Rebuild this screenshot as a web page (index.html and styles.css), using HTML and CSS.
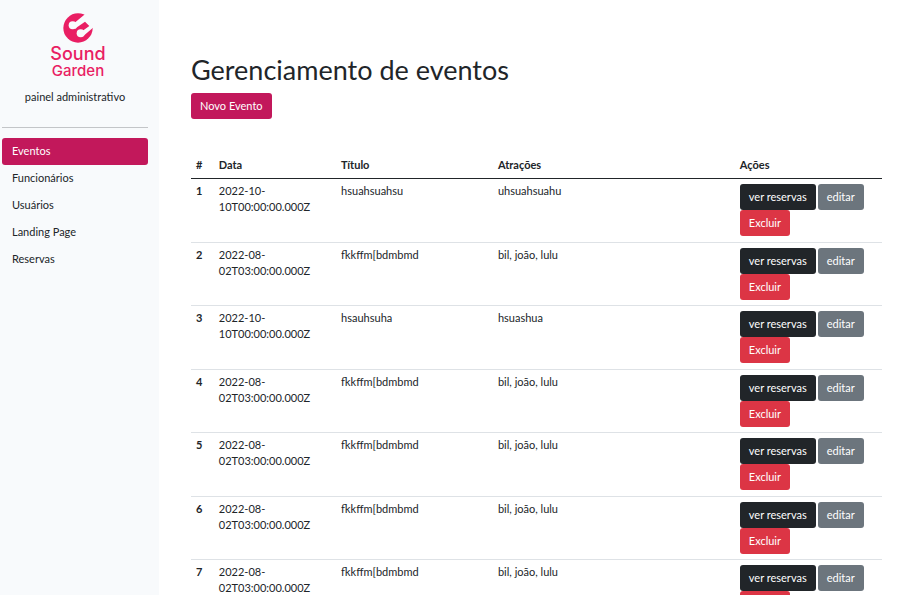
FILE: index.html
```html
<!DOCTYPE html>
<html lang="pt-BR">
<head>
  <meta charset="utf-8">
  <meta name="viewport" content="width=device-width, initial-scale=1">
  <title>Sound Garden - Gerenciamento de eventos</title>
  <link rel="stylesheet" href="styles.css">
</head>
<body>
  <aside class="sidebar">
    <div class="brand">
      <svg class="brand-mark" viewBox="0 0 90 90" aria-hidden="true">
        <circle cx="45" cy="45" r="44" fill="#e91e63"/>
        <path d="M34 30 L64 5 L95 0 L95 40 L62 68 L48 55 L34 44 Z" fill="#f8fafc"/>
        <path d="M36 50 L42 43 L66 26 L79 39 L58 54 L45 66 Z" fill="#e91e63"/>
        <circle cx="29" cy="37" r="12" fill="#f8fafc"/>
        <circle cx="53" cy="61" r="12" fill="#f8fafc"/>
      </svg>
      <span class="brand-sound">Sound</span>
      <span class="brand-garden">Garden</span>
    </div>
    <p class="subtitle">painel administrativo</p>
    <hr class="divider">
    <nav class="menu">
      <a class="menu-link active" href="#eventos">Eventos</a>
      <a class="menu-link" href="#funcionarios">Funcionários</a>
      <a class="menu-link" href="#usuarios">Usuários</a>
      <a class="menu-link" href="#landing">Landing Page</a>
      <a class="menu-link" href="#reservas">Reservas</a>
    </nav>
  </aside>
  <main class="content">
    <h1 class="title">Gerenciamento de eventos</h1>
    <a class="btn btn-primary" href="#novo">Novo Evento</a>
    <table class="events">
      <colgroup><col class="col-id"><col class="col-date"><col class="col-title"><col class="col-acts"><col class="col-actions"></colgroup>
      <thead>
        <tr><th scope="col">#</th><th scope="col">Data</th><th scope="col">Título</th><th scope="col">Atrações</th><th scope="col">Ações</th></tr>
      </thead>
      <tbody>
        <tr><th scope="row">1</th><td>2022-10-10T00:00:00.000Z</td><td>hsuahsuahsu</td><td>uhsuahsuahu</td><td><div class="actions"><button class="btn btn-dark">ver reservas</button><button class="btn btn-secondary">editar</button><button class="btn btn-danger">Excluir</button></div></td></tr>
        <tr><th scope="row">2</th><td>2022-08-02T03:00:00.000Z</td><td>fkkffm[bdmbmd</td><td>bil, joão, lulu</td><td><div class="actions"><button class="btn btn-dark">ver reservas</button><button class="btn btn-secondary">editar</button><button class="btn btn-danger">Excluir</button></div></td></tr>
        <tr><th scope="row">3</th><td>2022-10-10T00:00:00.000Z</td><td>hsauhsuha</td><td>hsuashua</td><td><div class="actions"><button class="btn btn-dark">ver reservas</button><button class="btn btn-secondary">editar</button><button class="btn btn-danger">Excluir</button></div></td></tr>
        <tr><th scope="row">4</th><td>2022-08-02T03:00:00.000Z</td><td>fkkffm[bdmbmd</td><td>bil, joão, lulu</td><td><div class="actions"><button class="btn btn-dark">ver reservas</button><button class="btn btn-secondary">editar</button><button class="btn btn-danger">Excluir</button></div></td></tr>
        <tr><th scope="row">5</th><td>2022-08-02T03:00:00.000Z</td><td>fkkffm[bdmbmd</td><td>bil, joão, lulu</td><td><div class="actions"><button class="btn btn-dark">ver reservas</button><button class="btn btn-secondary">editar</button><button class="btn btn-danger">Excluir</button></div></td></tr>
        <tr><th scope="row">6</th><td>2022-08-02T03:00:00.000Z</td><td>fkkffm[bdmbmd</td><td>bil, joão, lulu</td><td><div class="actions"><button class="btn btn-dark">ver reservas</button><button class="btn btn-secondary">editar</button><button class="btn btn-danger">Excluir</button></div></td></tr>
        <tr><th scope="row">7</th><td>2022-08-02T03:00:00.000Z</td><td>fkkffm[bdmbmd</td><td>bil, joão, lulu</td><td><div class="actions"><button class="btn btn-dark">ver reservas</button><button class="btn btn-secondary">editar</button><button class="btn btn-danger">Excluir</button></div></td></tr>
      </tbody>
    </table>
  </main>
</body>
</html>
```

FILE: styles.css
```css
* { box-sizing: border-box; }

body {
  margin: 0;
  height: 100vh;
  display: flex;
  overflow: hidden;
  background: #fff;
  color: #212529;
  font: 400 11px/16px Lato, "Liberation Sans", sans-serif;
}

.sidebar {
  flex: 0 0 159px;
  padding: 12px 11px 0 2px;
  background: #f8fafc;
}

.brand {
  display: flex;
  flex-direction: column;
  align-items: center;
  padding-left: 6px;
  color: #e91e63;
  font-family: Inter, "Liberation Sans", sans-serif;
  font-weight: 500;
}

.brand-mark { width: 30px; height: 32px; }
.brand-sound { font-size: 18px; line-height: 19px; }
.brand-garden { font-size: 15px; line-height: 16px; }

.subtitle { margin: 10px 0 22px; text-align: center; }

.divider {
  margin: 0 0 10px;
  border: 0;
  border-top: 1px solid #c3c5c8;
}

.menu { display: flex; flex-direction: column; }

.menu-link {
  padding: 5px 10px 6px;
  border-radius: 3px;
  color: #212529;
  text-decoration: none;
}

.menu-link.active { background: #c2185b; color: #fff; }

.content {
  flex: 1;
  min-width: 0;
  padding: 54px 28px 0 32px;
}

.title {
  margin: 0 0 7px;
  font-size: 27px;
  line-height: 32px;
  font-weight: 400;
}

.btn {
  display: inline-block;
  padding: 5px 9px;
  border: 0;
  border-radius: 3px;
  color: #fff;
  font: 400 11px/16px Lato, "Liberation Sans", sans-serif;
  text-decoration: none;
  white-space: nowrap;
}

.btn-primary { background: #c2185b; }
.btn-dark { background: #212529; }
.btn-secondary { background: #6c757d; }
.btn-danger { background: #dc3545; }

.events {
  width: 100%;
  margin-top: 33px;
  table-layout: fixed;
  border-collapse: separate;
  border-spacing: 0;
}

.col-id { width: 3.3%; }
.col-date { width: 17.7%; }
.col-title { width: 22.7%; }
.col-acts { width: 35%; }
.col-actions { width: 21.3%; }

.events th,
.events td {
  padding: 4px 5px;
  border-bottom: 1px solid #dee2e6;
  text-align: left;
  vertical-align: top;
}

.events th { font-weight: 700; }
.events thead th { padding: 5px; border-bottom-color: #212529; }
.events tbody td:last-child { padding-top: 5px; padding-bottom: 5px; }
.events tbody tr:nth-child(odd) td:last-child { padding-bottom: 6px; }

.actions { display: flex; flex-wrap: wrap; column-gap: 2px; }
```
